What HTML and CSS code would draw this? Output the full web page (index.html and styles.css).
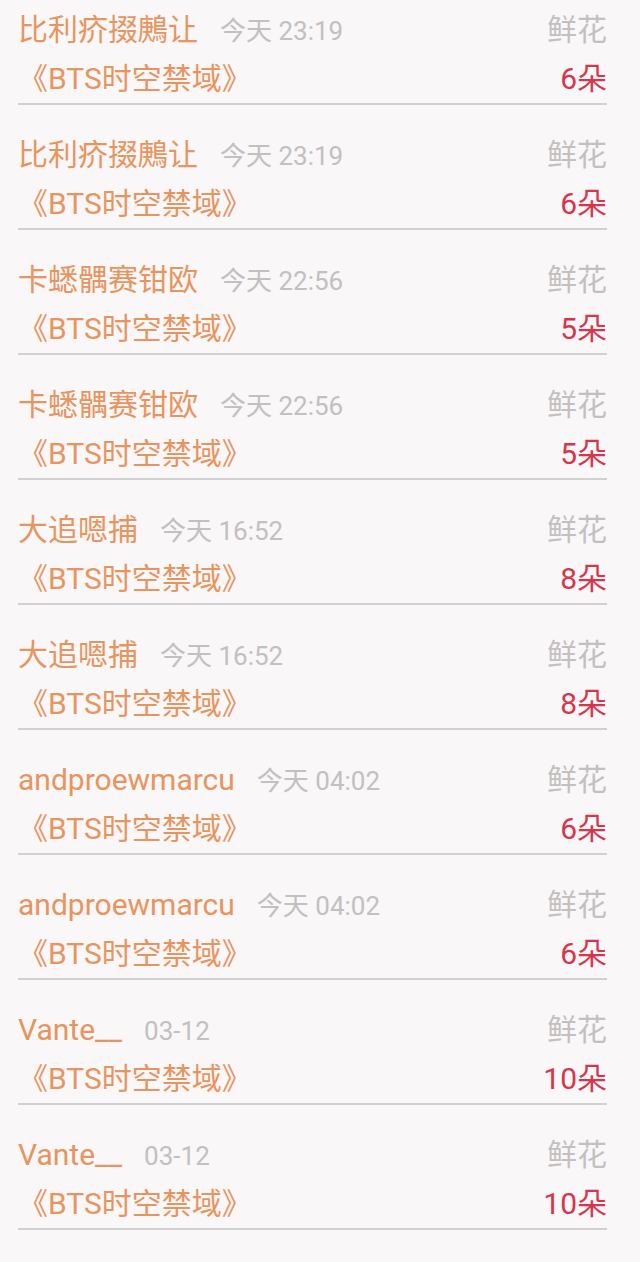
FILE: index.html
```html
<!DOCTYPE html>
<html lang="zh-CN">
<head>
    <meta charset="UTF-8">
    <meta name="viewport" content="width=device-width, initial-scale=1.0">
    <title>鲜花记录</title>
    <link rel="stylesheet" href="styles.css">
</head>
<body>
    <div class="list">
        <div class="item">
            <div class="line">
                <span class="name">比利疥掇鶊让</span><span class="time">今天 23:19</span>
                <span class="gift">鲜花</span>
            </div>
            <div class="line">
                <span class="book">《BTS时空禁域》</span>
                <span class="count">6朵</span>
            </div>
        </div>
        <div class="item">
            <div class="line">
                <span class="name">比利疥掇鶊让</span><span class="time">今天 23:19</span>
                <span class="gift">鲜花</span>
            </div>
            <div class="line">
                <span class="book">《BTS时空禁域》</span>
                <span class="count">6朵</span>
            </div>
        </div>
        <div class="item">
            <div class="line">
                <span class="name">卡蟋髃赛钳欧</span><span class="time">今天 22:56</span>
                <span class="gift">鲜花</span>
            </div>
            <div class="line">
                <span class="book">《BTS时空禁域》</span>
                <span class="count">5朵</span>
            </div>
        </div>
        <div class="item">
            <div class="line">
                <span class="name">卡蟋髃赛钳欧</span><span class="time">今天 22:56</span>
                <span class="gift">鲜花</span>
            </div>
            <div class="line">
                <span class="book">《BTS时空禁域》</span>
                <span class="count">5朵</span>
            </div>
        </div>
        <div class="item">
            <div class="line">
                <span class="name">大追嗯捕</span><span class="time">今天 16:52</span>
                <span class="gift">鲜花</span>
            </div>
            <div class="line">
                <span class="book">《BTS时空禁域》</span>
                <span class="count">8朵</span>
            </div>
        </div>
        <div class="item">
            <div class="line">
                <span class="name">大追嗯捕</span><span class="time">今天 16:52</span>
                <span class="gift">鲜花</span>
            </div>
            <div class="line">
                <span class="book">《BTS时空禁域》</span>
                <span class="count">8朵</span>
            </div>
        </div>
        <div class="item">
            <div class="line">
                <span class="name">andproewmarcu</span><span class="time">今天 04:02</span>
                <span class="gift">鲜花</span>
            </div>
            <div class="line">
                <span class="book">《BTS时空禁域》</span>
                <span class="count">6朵</span>
            </div>
        </div>
        <div class="item">
            <div class="line">
                <span class="name">andproewmarcu</span><span class="time">今天 04:02</span>
                <span class="gift">鲜花</span>
            </div>
            <div class="line">
                <span class="book">《BTS时空禁域》</span>
                <span class="count">6朵</span>
            </div>
        </div>
        <div class="item">
            <div class="line">
                <span class="name">Vante__</span><span class="time">03-12</span>
                <span class="gift">鲜花</span>
            </div>
            <div class="line">
                <span class="book">《BTS时空禁域》</span>
                <span class="count">10朵</span>
            </div>
        </div>
        <div class="item">
            <div class="line">
                <span class="name">Vante__</span><span class="time">03-12</span>
                <span class="gift">鲜花</span>
            </div>
            <div class="line">
                <span class="book">《BTS时空禁域》</span>
                <span class="count">10朵</span>
            </div>
        </div>
    </div>
</body>
</html>
```

FILE: styles.css
```css
body {
    margin: 0;
    background-color: #f9f7f8;
    font-family: Roboto, "Noto Sans CJK SC", sans-serif;
}
.list {
    margin-top: -20px;
    padding: 0 33px 0 18px;
}
.item {
    display: flex;
    flex-direction: column;
    gap: 1px;
    padding-top: 26px;
    border-bottom: 2px solid #d2d0d1;
}
.line {
    display: flex;
    align-items: baseline;
    height: 48px;
    line-height: 48px;
}
.name {
    font-size: 30px;
    color: #e8945e;
}
.time {
    margin-left: 22px;
    font-size: 26px;
    color: #c2c0c1;
}
.gift {
    margin-left: auto;
    font-size: 30px;
    color: #c2c0c1;
}
.book {
    font-size: 30px;
    color: #e8945e;
}
.count {
    margin-left: auto;
    font-size: 30px;
    color: #d8344c;
}
```
